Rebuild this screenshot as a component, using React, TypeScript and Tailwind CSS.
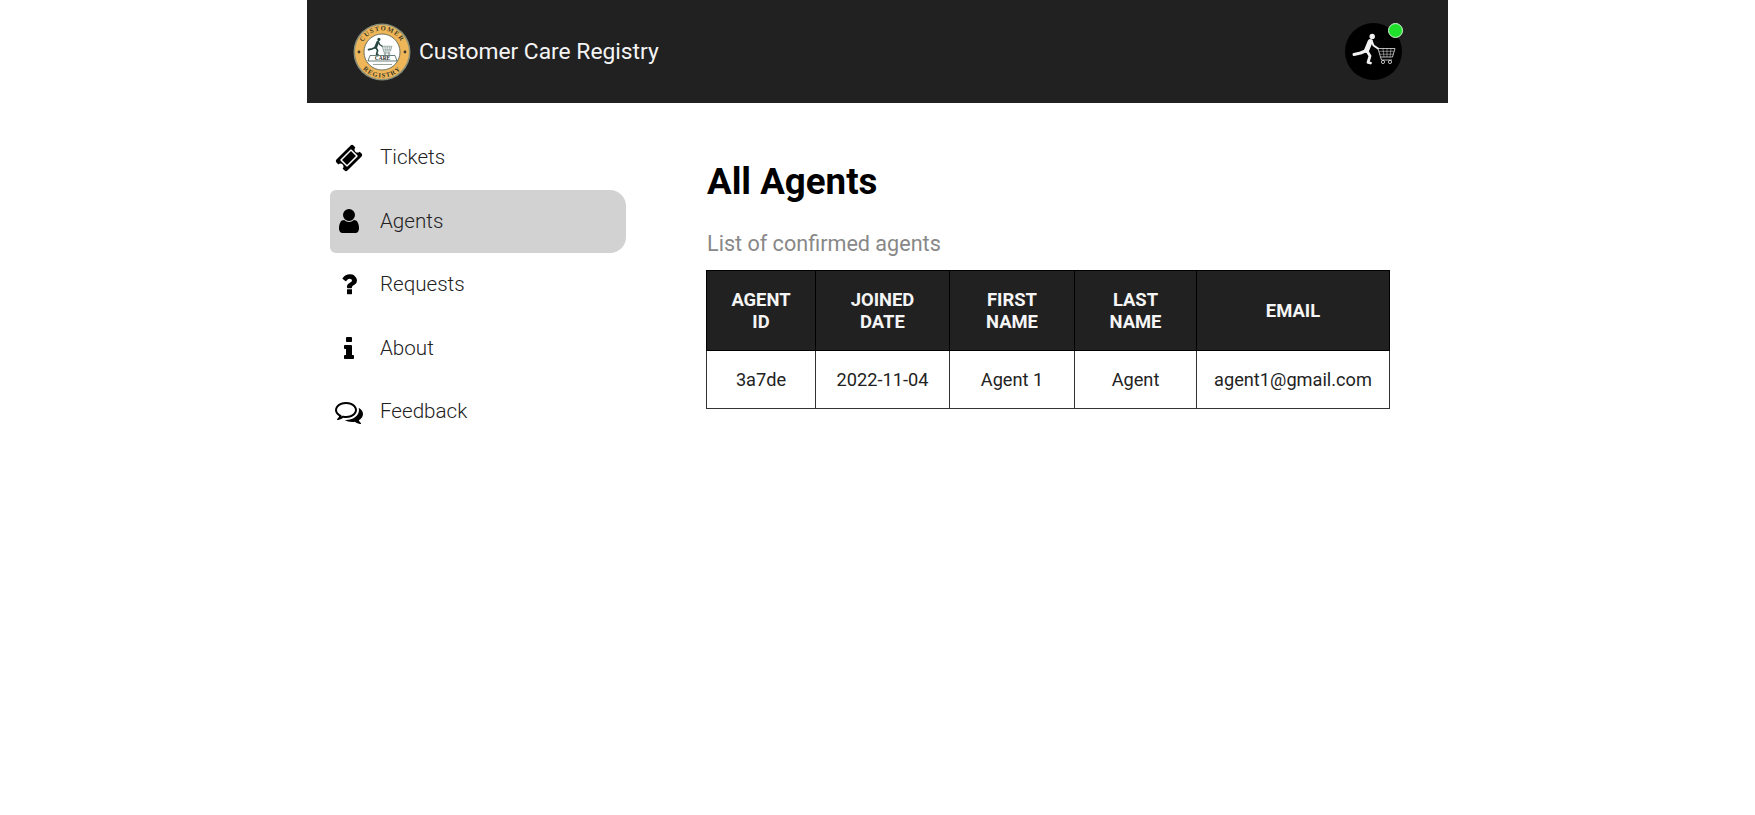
import React from "react";

function Figure({ fill, stroke }: { fill: string; stroke: string }) {
  return (
    <g>
      <g fill="none" stroke={fill} strokeLinecap="round" strokeLinejoin="round">
        <circle cx="27.2" cy="13.5" r="2.7" fill={fill} stroke="none" />
        <path d="M25.2 18.5 L21.5 27.5" strokeWidth="5" />
        <path d="M21.5 27.5 L15.5 30 L9 31.5" strokeWidth="3" />
        <path d="M22 28 L25 33 L23 39.5 L25.5 40" strokeWidth="2.8" />
        <path d="M26.5 17.5 L28.5 22.5 L33 25.5" strokeWidth="2" />
      </g>
      <g fill="none" stroke={stroke} strokeWidth="0.8" strokeLinejoin="round">
        <path d="M33 25.5 L50 25.5 L47.5 34 L35.5 34 Z" />
        <path d="M34 28.3 H49 M34.7 31.2 H48.2 M38 25.5 L39 34 M42 25.5 V34 M46 25.5 L45 34" strokeWidth="0.5" />
        <path d="M35.5 34 L36.5 37 H47" />
        <circle cx="38" cy="39" r="1.6" />
        <circle cx="45" cy="39" r="1.6" />
      </g>
    </g>
  );
}

function Logo() {
  return (
    <svg viewBox="0 0 58 58" className="w-[58px] h-[58px] shrink-0">
      <defs>
        <path id="logoTop" d="M7.5 29 A21.5 21.5 0 0 1 50.5 29" />
        <path id="logoBottom" d="M3.5 29 A25.5 25.5 0 0 0 54.5 29" />
      </defs>
      <circle cx="29" cy="29" r="28.5" fill="#8a8f78" />
      <circle cx="29" cy="29" r="27" fill="#eeb658" />
      <circle cx="29" cy="29" r="18" fill="#fff" stroke="#4d5a4d" strokeWidth="0.8" />
      <text fontSize="6.6" fontWeight="700" fill="#3b3a2a" letterSpacing="1.1" fontFamily="'Liberation Serif', serif">
        <textPath href="#logoTop" startOffset="50%" textAnchor="middle">CUSTOMER</textPath>
      </text>
      <text fontSize="6.6" fontWeight="700" fill="#3b3a2a" letterSpacing="1.1" fontFamily="'Liberation Serif', serif">
        <textPath href="#logoBottom" startOffset="50%" textAnchor="middle">REGISTRY</textPath>
      </text>
      <circle cx="6" cy="29" r="1.4" fill="#3b3a2a" />
      <circle cx="52" cy="29" r="1.4" fill="#3b3a2a" />
      <g transform="translate(10.4 8.7) scale(0.57)">
        <Figure fill="#26473f" stroke="#33544c" />
      </g>
      <path d="M17 32.5 H42 L44 38 H15 Z" fill="#fff" stroke="#26473f" strokeWidth="0.7" />
      <text x="29.5" y="37" textAnchor="middle" fontSize="5.4" fontWeight="700" fill="#1f2a26" fontFamily="'Liberation Serif', serif">CARE</text>
      <rect x="20" y="41" width="19" height="1" fill="#9aa39c" />
    </svg>
  );
}

const paths = {
  ticket:
    "M1024 452l316 316-572 572-316-316zm-211 979l618-618q19-19 19-45t-19-45l-362-362q-18-18-45-18t-45 18l-618 618q-19 19-19 45t19 45l362 362q18 18 45 18t45-18zm889-637l-907 908q-37 37-90.5 37t-90.5-37l-126-126q56-56 56-136t-56-136-136-56-136 56l-125-126q-37-37-37-90.5t37-90.5l907-906q37-37 90.5-37t90.5 37l125 125q-56 56-56 136t56 136 136 56 136-56l126 125q37 37 37 90.5t-37 90.5z",
  user:
    "M1536 1399q0 109-62.5 187t-150.5 78h-854q-88 0-150.5-78t-62.5-187q0-85 8.5-160.5t31.5-152 58.5-131 94-89 134.5-34.5q131 128 313 128t313-128q76 0 134.5 34.5t94 89 58.5 131 31.5 152 8.5 160.5zm-256-887q0 159-112.5 271.5t-271.5 112.5-271.5-112.5-112.5-271.5 112.5-271.5 271.5-112.5 271.5 112.5 112.5 271.5z",
  question:
    "M704 1008v240q0 16-12 28t-28 12h-240q-16 0-28-12t-12-28v-240q0-16 12-28t28-12h240q16 0 28 12t12 28zm316-600q0 54-15.5 101t-35 76.5-55 59.5-57.5 43.5-61 35.5q-41 23-68.5 65t-27.5 67q0 17-12 32.5t-28 15.5h-240q-15 0-25.5-18.5t-10.5-37.5v-45q0-83 65-156.5t143-108.5q59-27 84-56t25-76q0-42-46.5-74t-107.5-32q-65 0-108 29-35 25-107 115-13 16-31 16-12 0-25-8l-164-125q-13-10-15.5-25t5.5-28q160-266 464-266 80 0 161 31t146 83 106 127.5 41 158.5z",
  info:
    "M704 1216v128q0 26-19 45t-45 19h-512q-26 0-45-19t-19-45v-128q0-26 19-45t45-19h64v-384h-64q-26 0-45-19t-19-45v-128q0-26 19-45t45-19h384q26 0 45 19t19 45v576h64q26 0 45 19t19 45zm-128-1152v192q0 26-19 45t-45 19h-256q-26 0-45-19t-19-45v-192q0-26 19-45t45-19h256q26 0 45 19t19 45z",
  comments:
    "M704 384q-153 0-286 52t-211.5 141-78.5 191q0 82 53 158t149 132l97 56-35 84q34-20 62-39l44-31 53 10q78 14 153 14 153 0 286-52t211.5-141 78.5-191-78.5-191-211.5-141-286-52zm0-128q191 0 353.5 68.5t256.5 186.5 94 257-94 257-256.5 186.5-353.5 68.5q-86 0-176-16-124 88-278 128-36 9-86 16h-3q-11 0-20.5-8t-11.5-21q-1-3-1-6.5t.5-6.5 2-6l2.5-5 3.5-5.5 4-5 4.5-5 4-4.5q5-6 23-25t26-29.5 22.5-29 25-38.5 20.5-44q-124-72-195-177t-71-224q0-139 94-257t256.5-186.5 353.5-68.5zm822 1169q10 24 20.5 44t25 38.5 22.5 29 26 29.5 23 25q1 1 4 4.5t4.5 5 4 5 3.5 5.5l2.5 5 2 6 .5 6.5-1 6.5q-3 14-13 22t-22 7q-50-7-86-16-154-40-278-128-90 16-176 16-271 0-472-132 58 4 88 4 161 0 309-45t264-129q125-92 192-212t67-254q0-77-23-152 129 71 204 178t75 230q0 120-71 224.5t-195 176.5z",
};

function Icon({ d, box, w, h }: { d: string; box: string; w: number; h: number }) {
  return (
    <svg viewBox={box} width={w} height={h} fill="currentColor">
      <path d={d} />
    </svg>
  );
}

const nav = [
  { label: "Tickets", icon: <Icon d={paths.ticket} box="0 0 1792 1792" w={28} h={28} /> },
  { label: "Agents", icon: <Icon d={paths.user} box="0 0 1792 1792" w={28} h={28} />, active: true },
  { label: "Requests", icon: <Icon d={paths.question} box="0 0 1024 1408" w={16} h={22} /> },
  { label: "About", icon: <Icon d={paths.info} box="0 0 768 1408" w={12} h={22} /> },
  { label: "Feedback", icon: <Icon d={paths.comments} box="0 0 1792 1792" w={28} h={28} /> },
];

const heads = [
  ["AGENT", "ID"],
  ["JOINED", "DATE"],
  ["FIRST", "NAME"],
  ["LAST", "NAME"],
  ["EMAIL"],
];
const cells = ["3a7de", "2022-11-04", "Agent 1", "Agent", "agent1@gmail.com"];
const widths = ["w-[109px]", "w-[134px]", "w-[125px]", "w-[122px]", "w-[193px]"];

export default function App() {
  return (
    <div className="min-h-[815px] bg-white font-['Roboto',sans-serif]">
      <div className="mx-auto w-[1141px]">
        <header className="h-[103px] bg-[#212121] flex items-center justify-between px-[46px]">
          <div className="flex items-center gap-[8px]">
            <Logo />
            <span className="pt-[2px] text-[22.8px] text-[#f5f5f5]">Customer Care Registry</span>
          </div>
          <div className="relative w-[57px] h-[57px] rounded-full bg-black">
            <svg viewBox="0 0 57 57" className="absolute left-0 top-0 w-[57px] h-[57px]">
              <Figure fill="#f2f2f2" stroke="#e4e4e4" />
            </svg>
            <span className="absolute right-[-1px] top-[-0.5px] w-[15px] h-[15px] rounded-full bg-[#1fe12b] border border-[#d8f5d8]" />
          </div>
        </header>
        <div className="flex">
          <nav className="w-[399px] pl-[23px] pt-[23px] shrink-0">
            {nav.map((n) => (
              <div
                key={n.label}
                className={`w-[296px] h-[63.5px] flex items-center ${n.active ? "bg-[#d2d2d2] rounded-tl-[6px] rounded-bl-[6px] rounded-tr-[16px] rounded-br-[16px]" : ""}`}
              >
                <span className="w-[38px] flex justify-center text-black">{n.icon}</span>
                <span className="ml-[12px] text-[20.6px] font-light text-[#222]">{n.label}</span>
              </div>
            ))}
          </nav>
          <main className="pt-[57px]">
            <h1 className="pl-[1px] text-[36.7px] leading-[44px] font-bold text-black">All Agents</h1>
            <p className="pl-[1px] mt-[27px] text-[21.6px] leading-[26px] text-[#888]">List of confirmed agents</p>
            <table className="mt-[13px] table-fixed border-collapse w-[683px] text-center">
              <thead>
                <tr className="bg-[#212121] h-[80px]">
                  {heads.map((h, i) => (
                    <th key={i} className={`${widths[i]} border border-black text-[18.4px] leading-[22px] font-bold text-[#f5f5f5]`}>
                      {h.map((t) => (
                        <div key={t}>{t}</div>
                      ))}
                    </th>
                  ))}
                </tr>
              </thead>
              <tbody>
                <tr className="h-[58px]">
                  {cells.map((c) => (
                    <td key={c} className="border border-[#333] text-[18.2px] text-[#222]">{c}</td>
                  ))}
                </tr>
              </tbody>
            </table>
          </main>
        </div>
      </div>
    </div>
  );
}
